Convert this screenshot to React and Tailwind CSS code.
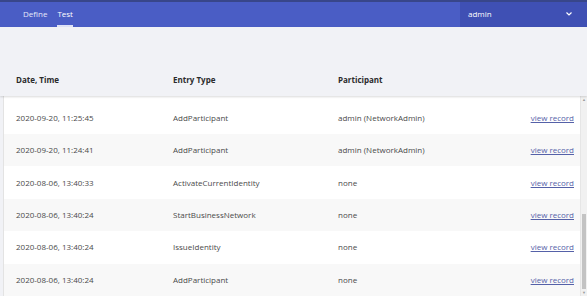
import React from 'react';

const rows = [
  { date: '2020-09-20, 11:25:45', type: 'AddParticipant', who: 'admin (NetworkAdmin)' },
  { date: '2020-09-20, 11:24:41', type: 'AddParticipant', who: 'admin (NetworkAdmin)' },
  { date: '2020-08-06, 13:40:33', type: 'ActivateCurrentIdentity', who: 'none' },
  { date: '2020-08-06, 13:40:24', type: 'StartBusinessNetwork', who: 'none' },
  { date: '2020-08-06, 13:40:24', type: 'IssueIdentity', who: 'none' },
  { date: '2020-08-06, 13:40:24', type: 'AddParticipant', who: 'none' },
];

export default function App() {
  return (
    <div className="w-[587px] h-[296px] overflow-hidden flex flex-col bg-[#f1f2f6] text-[8px] text-[#4a4a4a]" style={{ fontFamily: '"Open Sans", "Liberation Sans", sans-serif' }}>
      {/* top nav */}
      <header className="h-[27px] flex border-t-2 border-[#38468a] bg-[#4a5dc5] text-white">
        <nav className="flex-1 flex items-stretch pl-[23px] gap-[10px]">
          <span className="flex items-center text-[#e6e9fa]">Define</span>
          <span className="flex items-center relative">
            Test
            <span className="absolute left-0 right-0 bottom-0 h-[2px] bg-[#dfe3f7]" />
          </span>
        </nav>
        <div className="w-[127px] bg-[#3f50b4] flex items-center justify-between pl-[8px] pr-[15px]">
          <span>admin</span>
          <svg width="6" height="4" viewBox="0 0 6 4"><path d="M0.5 0.5 L3 3 L5.5 0.5" stroke="white" strokeWidth="1.2" fill="none" /></svg>
        </div>
      </header>

      {/* column header */}
      <div className="h-[69px] flex items-end pb-[10px] font-bold text-[#2b2b2b] shadow-[0_1px_2px_rgba(0,0,0,0.15)] z-10 bg-[#f1f2f6]">
        <div className="w-[173px] pl-[16px]">Date, Time</div>
        <div className="w-[165px]">Entry Type</div>
        <div className="flex-1">Participant</div>
      </div>

      {/* table body */}
      <div className="flex-1 flex pl-[3px]">
        <div className="flex-1 flex flex-col bg-white border-l border-[#e3e3e3]">
          <div className="h-[6px] bg-white" />
          {rows.map((r, i) => (
            <div key={i} className={`h-[32.4px] shrink-0 flex items-center ${i % 2 ? 'bg-[#f8f8f8]' : 'bg-white'}`}>
              <div className="w-[169px] pl-[12px]">{r.date}</div>
              <div className="w-[165px]">{r.type}</div>
              <div className="flex-1">{r.who}</div>
              <a className="pr-[6px] text-[#5561a8] underline">view record</a>
            </div>
          ))}
        </div>
        {/* scrollbar */}
        <div className="w-[7px] bg-[#f1f1f1] border-l border-[#e6e6e6] flex flex-col items-center">
          <div className="h-[8px] flex items-center text-[4px] text-[#9a9a9a]">▲</div>
          <div className="flex-1 w-full flex flex-col justify-end pb-[1px]">
            <div className="h-[75px] mx-[1px] bg-[#c3c3c3]" />
          </div>
          <div className="h-[6px] flex items-center text-[4px] text-[#9a9a9a]">▼</div>
        </div>
      </div>
    </div>
  );
}
